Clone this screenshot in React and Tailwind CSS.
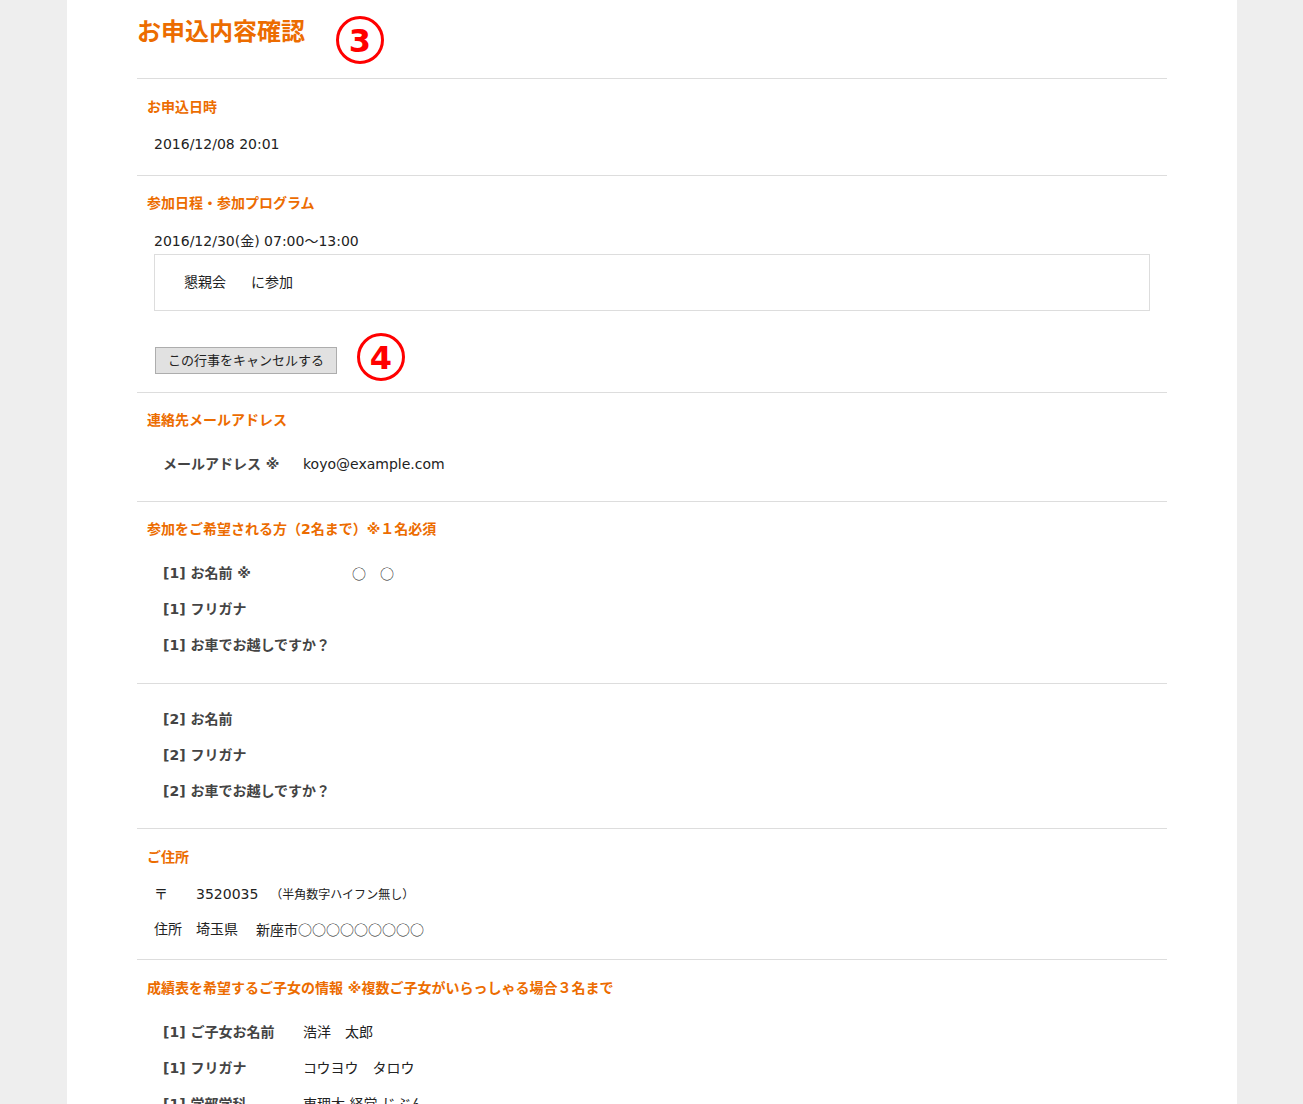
import React from 'react';

const FONT = { fontFamily: '"DejaVu Sans", "Noto Sans CJK JP", sans-serif' };

function Circled({ n }) {
  return (
    <div className="w-[48px] h-[48px] rounded-full border-[3px] border-[#ff0000] flex items-center justify-center shrink-0">
      <span className="text-[#ff0000] text-[32px] font-bold leading-none mt-[1px]">{n}</span>
    </div>
  );
}

function Heading({ children, top = 'mt-[17px]' }) {
  return (
    <div className={`${top} h-[20px] leading-[20px] pl-[10px] text-[14px] font-bold text-[#ec6c00]`}>
      {children}
    </div>
  );
}

function Row({ label, value, valueClass = '' }) {
  return (
    <div className="flex items-center h-[36px] pl-[26px] text-[14px]">
      <div className="w-[140px] font-bold text-[#444] whitespace-nowrap">{label}</div>
      <div className={`text-[#222] whitespace-nowrap ${valueClass}`}>{value}</div>
    </div>
  );
}

export default function App() {
  return (
    <div className="min-h-screen bg-[#eeeeee]" style={FONT}>
      <div className="ml-[67px] w-[1170px] bg-white px-[70px] min-h-[1104px]">
        {/* Title */}
        <div className="flex items-start h-[78px] pt-[16px]">
          <h1 className="mt-[4px] text-[24px] leading-[24px] font-bold text-[#ec6c00]">お申込内容確認</h1>
          <div className="ml-[31px]">
            <Circled n="3" />
          </div>
        </div>

        {/* お申込日時 */}
        <section className="border-t border-[#dddddd] pb-[13px]">
          <Heading top="mt-[18px]">お申込日時</Heading>
          <div className="mt-[9px] h-[36px] flex items-center pl-[17px] text-[14px] text-[#222]">2016/12/08 20:01</div>
        </section>

        {/* 参加日程 */}
        <section className="border-t border-[#dddddd] pb-[11px]">
          <Heading>参加日程・参加プログラム</Heading>
          <div className="mt-[18px] h-[20px] leading-[20px] pl-[17px] text-[14px] text-[#222]">2016/12/30(金) 07:00～13:00</div>
          <div className="mt-[3px] mx-[17px] h-[57px] border border-[#dddddd] flex items-center pl-[29px] text-[14px] text-[#222]">
            <span>懇親会</span>
            <span className="ml-[25px]">に参加</span>
          </div>
          <div className="mt-[22px] ml-[18px] flex items-start">
            <button className="mt-[14px] h-[27px] w-[182px] bg-[#e1e1e1] border border-[#adadad] text-[13px] text-[#222]">
              この行事をキャンセルする
            </button>
            <div className="ml-[20px]">
              <Circled n="4" />
            </div>
          </div>
        </section>

        {/* 連絡先 */}
        <section className="border-t border-[#dddddd] pb-[19px]">
          <Heading>連絡先メールアドレス</Heading>
          <div className="mt-[16px]">
            <Row label="メールアドレス ※" value="koyo@example.com" />
          </div>
        </section>

        {/* 参加者1 */}
        <section className="border-t border-[#dddddd] pb-[20px]">
          <Heading>参加をご希望される方（2名まで）※１名必須</Heading>
          <div className="mt-[16px]">
            <Row label="[1] お名前 ※" value="○　○" valueClass="pl-[49px] font-['Noto_Sans_CJK_JP']" />
            <Row label="[1] フリガナ" value="" />
            <Row label="[1] お車でお越しですか？" value="" />
          </div>
        </section>

        {/* 参加者2 */}
        <section className="border-t border-[#dddddd] pt-[17px] pb-[19px]">
          <Row label="[2] お名前" value="" />
          <Row label="[2] フリガナ" value="" />
          <Row label="[2] お車でお越しですか？" value="" />
        </section>

        {/* ご住所 */}
        <section className="border-t border-[#dddddd] pb-[12px]">
          <Heading top="mt-[18px]">ご住所</Heading>
          <div className="mt-[10px] pl-[17px] text-[14px] text-[#222]">
            <div className="flex items-center h-[35px]">
              <span className="w-[42px]">〒</span>
              <span>3520035</span>
              <span className="ml-[12px] text-[12px]">（半角数字ハイフン無し）</span>
            </div>
            <div className="flex items-center h-[35px]">
              <span className="w-[42px]">住所</span>
              <span>埼玉県</span>
              <span className="ml-[18px] font-['Noto_Sans_CJK_JP']">新座市○○○○○○○○○</span>
            </div>
          </div>
        </section>

        {/* ご子女 */}
        <section className="border-t border-[#dddddd] pb-[12px]">
          <Heading top="mt-[18px]">成績表を希望するご子女の情報 ※複数ご子女がいらっしゃる場合３名まで</Heading>
          <div className="mt-[16px]">
            <Row label="[1] ご子女お名前" value="浩洋　太郎" />
            <Row label="[1] フリガナ" value="コウヨウ　タロウ" />
            <Row label="[1] 学部学科" value="東理大 経営 じぶん" />
          </div>
        </section>
      </div>
    </div>
  );
}
